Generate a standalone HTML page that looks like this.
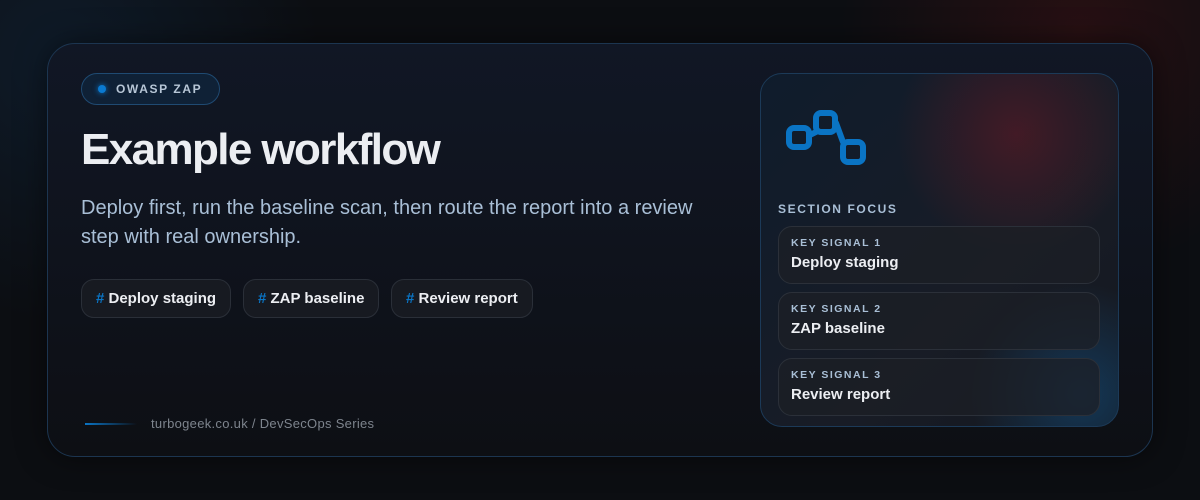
<!DOCTYPE html>
<html><head><meta charset="utf-8"><style>
*{margin:0;padding:0;box-sizing:border-box}
body{width:1200px;height:500px;overflow:hidden;font-family:"Liberation Sans",sans-serif;
background:radial-gradient(circle at 1080px 30px,rgba(110,20,20,.28),transparent 240px),radial-gradient(circle at 60px 60px,rgba(20,60,100,.28),transparent 260px),#0c0e12;position:relative}
.card{position:absolute;left:47px;top:43px;width:1106px;height:414px;border-radius:28px;border:1px solid #1c3550;background:linear-gradient(180deg,#111725,#0d0f14);box-shadow:0 0 30px rgba(0,0,0,.5)}
.pill{position:absolute;left:81px;top:73px;width:139px;height:32px;border-radius:16px;border:1px solid #1f4a72;background:#0f2136;color:#b7c6d6;font-weight:700;font-size:12px;letter-spacing:1.6px;line-height:30px;padding-left:34px}
.pill:before{content:"";position:absolute;left:16px;top:11px;width:8px;height:8px;border-radius:50%;background:#0a7ad1;box-shadow:0 0 6px #0a7ad1}
h1{position:absolute;left:81px;top:125px;font-size:44px;font-weight:700;color:#eceef2;letter-spacing:-1.6px}
.desc{position:absolute;left:81px;top:194px;width:630px;font-size:20px;line-height:29px;color:#a9bfd6}
.tag{position:absolute;top:279px;height:39px;border-radius:13px;border:1px solid #2a2f38;background:#171a21;color:#eceef2;font-weight:700;font-size:15px;line-height:38px;padding-left:14px}
.tag b{color:#0a74c4}
.foot{position:absolute;left:151px;top:416px;font-size:13px;color:#7d848d;letter-spacing:.3px}
.line{position:absolute;left:85px;top:423px;width:52px;height:2px;background:linear-gradient(90deg,#0a74c4,transparent)}
.panel{position:absolute;left:760px;top:73px;width:359px;height:354px;border-radius:22px;border:1px solid #1c3a58;
background:radial-gradient(circle at 255px 60px,rgba(110,25,35,.5),transparent 120px),radial-gradient(circle at 320px 320px,rgba(20,80,130,.55),transparent 110px),linear-gradient(135deg,#0f1c2c,#181c26 60%,#14181f)}
.sf{position:absolute;left:778px;top:202px;font-size:12px;font-weight:700;letter-spacing:1.6px;color:#a9bfd6}
.sig{position:absolute;left:778px;width:322px;height:58px;border-radius:14px;border:1px solid #2b3039;background:rgba(28,31,38,.75);padding:10px 0 0 12px}
.sig small{display:block;font-size:10.5px;font-weight:700;letter-spacing:1.5px;color:#a9bfd6}
.sig div{font-size:15px;font-weight:700;color:#eceef2;margin-top:5px}
</style></head><body>
<div class="card"></div>
<div class="pill">OWASP ZAP</div>
<h1>Example workflow</h1>
<div class="desc">Deploy first, run the baseline scan, then route the report into a review step with real ownership.</div>
<div class="tag" style="left:81px;width:150px"><b>#</b> Deploy staging</div>
<div class="tag" style="left:243px;width:136px"><b>#</b> ZAP baseline</div>
<div class="tag" style="left:391px;width:142px"><b>#</b> Review report</div>
<div class="line"></div>
<div class="foot">turbogeek.co.uk / DevSecOps Series</div>
<div class="panel"></div>
<svg style="position:absolute;left:780px;top:105px" width="95" height="70" viewBox="780 105 95 70" fill="none" stroke="#0a74c4" stroke-width="6" stroke-linecap="round">
<rect x="789" y="128" width="20" height="19" rx="5"/>
<rect x="816" y="113" width="19" height="19" rx="5"/>
<rect x="843" y="142" width="20" height="20" rx="5"/>
<path d="M810 135 L818 131"/><path d="M836 123 L843 142"/>
</svg>
<div class="sf">SECTION FOCUS</div>
<div class="sig" style="top:226px"><small>KEY SIGNAL 1</small><div>Deploy staging</div></div>
<div class="sig" style="top:292px"><small>KEY SIGNAL 2</small><div>ZAP baseline</div></div>
<div class="sig" style="top:358px"><small>KEY SIGNAL 3</small><div>Review report</div></div>
</body></html>
